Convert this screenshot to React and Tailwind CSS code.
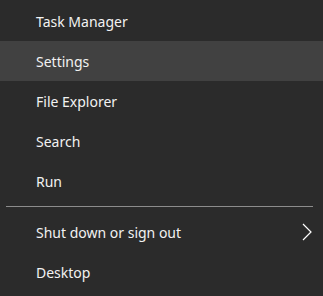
const items = ['Task Manager', 'Settings', 'File Explorer', 'Search', 'Run'];

const Row = ({ label, active, chevron }) => (
  <div className={`h-10 flex items-center pl-9 pr-3 ${active ? 'bg-[#414141]' : ''}`}>
    <span className="flex-1 text-[14px] text-[#f2f2f2]">{label}</span>
    {chevron && (
      <svg width="10" height="18" viewBox="0 0 10 18" className="mr-[-1px]">
        <path d="M1 1 L9 9 L1 17" fill="none" stroke="#ffffff" strokeWidth="1.2" />
      </svg>
    )}
  </div>
);

export default function App() {
  return (
    <div
      className="w-[323px] h-[296px] bg-[#2b2b2b] pt-px select-none"
      style={{ fontFamily: '"Noto Sans", "Open Sans", sans-serif' }}
    >
      {items.map((label) => (
        <Row key={label} label={label} active={label === 'Settings'} />
      ))}
      <div className="py-[5px] pl-[6px] pr-[10px]">
        <div className="h-px bg-[#8c8c8c]" />
      </div>
      <Row label="Shut down or sign out" chevron />
      <Row label="Desktop" />
    </div>
  );
}
